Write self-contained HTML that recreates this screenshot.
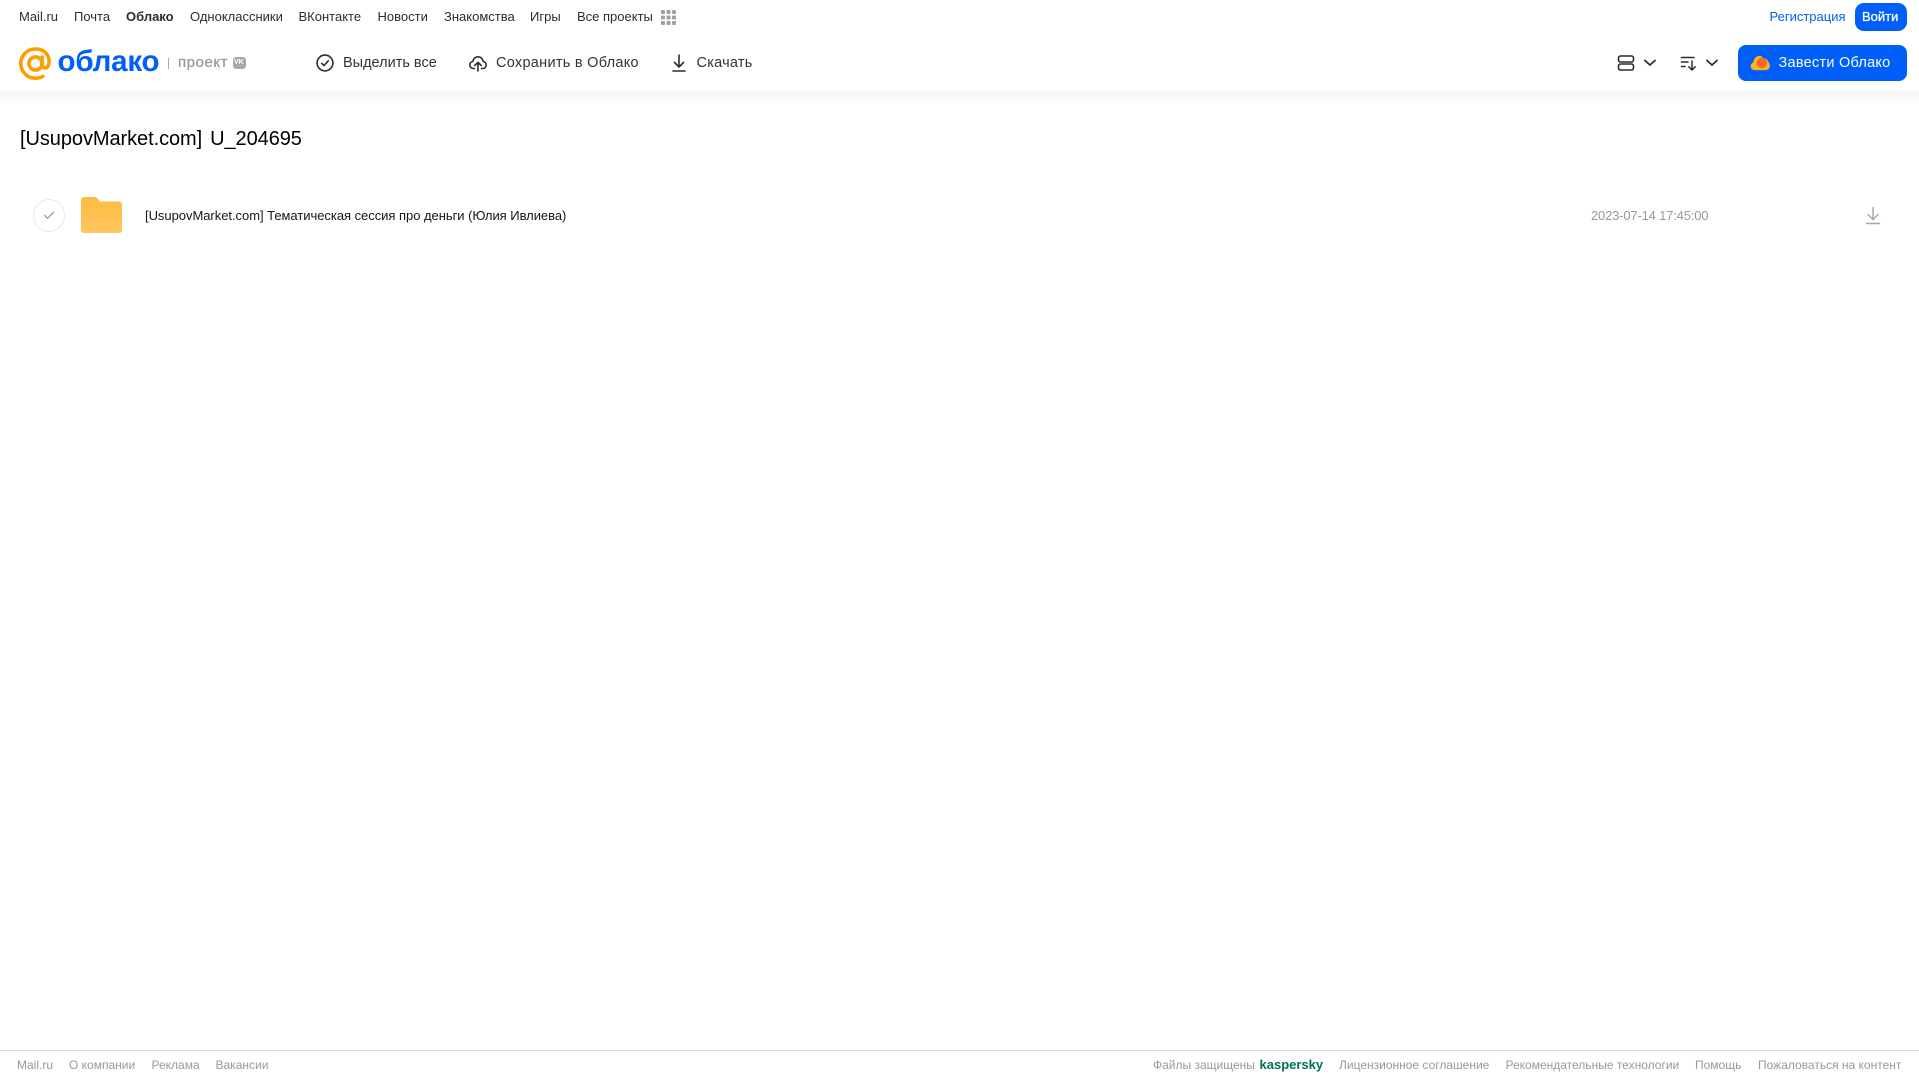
<!DOCTYPE html>
<html lang="ru">
<head>
<meta charset="utf-8">
<title>Облако</title>
<style>
html,body{margin:0;padding:0;background:#fff;}
body{position:relative;width:1919px;height:1079px;overflow:hidden;font-family:"Liberation Sans",Arial,sans-serif;}
.t{position:absolute;white-space:nowrap;line-height:16px;}
.n{top:9px;font-size:13px;color:#2c2d2e;}
.a{top:55px;font-size:14.5px;color:#333;}
.f{top:1057px;font-size:12px;color:#999;}
svg{position:absolute;display:block;}
#hdr{position:absolute;left:0;top:0;width:1919px;height:91px;background:#fff;}
#shadow{position:absolute;left:0;top:91px;width:1919px;height:12px;background:linear-gradient(#f5f5f5,#fff);}
#line{position:absolute;left:0;top:1050px;width:1919px;height:1px;background:#d9d9d9;}
</style>
</head>
<body>
<div id="shadow"></div>
<div id="hdr"></div>

<span class="t n" style="left:19px">Mail.ru</span>
<span class="t n" style="left:74px">Почта</span>
<span class="t n" style="left:126px;font-weight:700">Облако</span>
<span class="t n" style="left:190px">Одноклассники</span>
<span class="t n" style="left:298.500px">ВКонтакте</span>
<span class="t n" style="left:377.500px">Новости</span>
<span class="t n" style="left:444px">Знакомства</span>
<span class="t n" style="left:530px">Игры</span>
<span class="t n" style="left:577px">Все проекты</span>
<svg style="left:661px;top:10px" width="15" height="15" fill="#a0a0a0">
<rect x="0" y="0" width="4" height="4" rx="1"/><rect x="5.500" y="0" width="4" height="4" rx="1"/><rect x="11" y="0" width="4" height="4" rx="1"/>
<rect x="0" y="5.500" width="4" height="4" rx="1"/><rect x="5.500" y="5.500" width="4" height="4" rx="1"/><rect x="11" y="5.500" width="4" height="4" rx="1"/>
<rect x="0" y="11" width="4" height="4" rx="1"/><rect x="5.500" y="11" width="4" height="4" rx="1"/><rect x="11" y="11" width="4" height="4" rx="1"/>
</svg>

<span class="t" style="left:1769.500px;top:9px;font-size:13px;color:#005ff9">Регистрация</span>
<div style="position:absolute;left:1855px;top:3px;width:52px;height:28px;border-radius:9px;background:#005ff9"></div>
<span class="t" style="left:1862px;top:9px;font-size:13px;color:#fff;-webkit-text-stroke:.3px #fff">Войти</span>

<!-- logo -->
<svg style="left:18px;top:46px" width="35" height="35" viewBox="0 0 35 35" fill="none" stroke="#ff9e00" stroke-width="3.600">
<circle cx="17.500" cy="17.500" r="6.600"/>
<path d="M24.100 11v8.200c0 3.200 4.900 3.900 6.300 .2 2.300-6.400-1-16.400-13-16.400C8.800 3 2.800 9.800 2.800 17.500c0 8.300 6.400 14.700 14.700 14.700 3 0 5.300-.7 7.300-1.800" stroke-linecap="round"/>
</svg>
<span class="t" style="left:57.500px;top:45px;font-size:29.500px;line-height:34px;font-weight:700;color:#005ff9;letter-spacing:-.2px">облако</span>
<div style="position:absolute;left:168px;top:58px;width:1px;height:11px;background:#a8a8a8"></div>
<span class="t" style="left:178px;top:55px;font-size:15px;color:#999;letter-spacing:.55px;-webkit-text-stroke:.25px #999">проект</span>
<div style="position:absolute;left:233px;top:57px;width:13px;height:12px;border-radius:3px;background:#a9a9a9"></div>
<span class="t" style="left:234px;top:55px;font-size:7px;font-weight:700;color:#fff">VK</span>

<!-- actions -->
<svg style="left:315px;top:53px" width="20" height="20" viewBox="0 0 20 20" fill="none" stroke="#2c2d2e" stroke-width="1.600">
<circle cx="10" cy="10" r="7.900"/><path d="M6.700 10.300l2.300 2.300 4.300-4.800" stroke-linecap="round" stroke-linejoin="round"/>
</svg>
<span class="t a" style="left:343px">Выделить все</span>

<svg style="left:468px;top:53px" width="20" height="20" viewBox="0 0 20 20" fill="none" stroke="#2c2d2e" stroke-width="1.600" stroke-linecap="round" stroke-linejoin="round">
<path d="M6.500 15.500H5.500C3.300 15.500 1.800 14 1.800 12c0-1.800 1.200-3.200 3-3.500C5.200 5.700 7.300 3.800 10 3.800s4.800 1.900 5.200 4.700c1.800.3 3 1.700 3 3.500 0 2-1.500 3.500-3.700 3.500h-1"/>
<path d="M10 18V9.500M6.800 12.500L10 9.300l3.200 3.200"/>
</svg>
<span class="t a" style="left:496px;letter-spacing:.28px">Сохранить в Облако</span>

<svg style="left:669px;top:53px" width="20" height="20" viewBox="0 0 20 20" fill="none" stroke="#2c2d2e" stroke-width="1.600" stroke-linecap="round" stroke-linejoin="round">
<path d="M10 2v12M5.500 9.500L10 14l4.500-4.500M4 18h12"/>
</svg>
<span class="t a" style="left:696.500px;letter-spacing:.24px">Скачать</span>

<!-- right icons -->
<svg style="left:1617px;top:54px" width="18" height="18" viewBox="0 0 18 18" fill="none" stroke="#2c2d2e" stroke-width="1.600">
<rect x="1.500" y="2" width="15" height="6" rx="2"/><rect x="1.500" y="10" width="15" height="6" rx="2"/>
</svg>
<svg style="left:1643px;top:58px" width="14" height="10" viewBox="0 0 14 10" fill="none" stroke="#2c2d2e" stroke-width="1.800" stroke-linecap="round" stroke-linejoin="round"><path d="M2 2.500l5 4.500 5-4.500"/></svg>
<svg style="left:1680px;top:54px" width="18" height="18" viewBox="0 0 18 18" fill="none" stroke="#2c2d2e" stroke-width="1.500" stroke-linecap="round" stroke-linejoin="round">
<path d="M1.500 3.500H14M1.500 8H8M1.500 12.500H5M12 7v9M8.800 12.800L12 16l3.200-3.200"/>
</svg>
<svg style="left:1705px;top:58px" width="14" height="10" viewBox="0 0 14 10" fill="none" stroke="#2c2d2e" stroke-width="1.800" stroke-linecap="round" stroke-linejoin="round"><path d="M2 2.500l5 4.500 5-4.500"/></svg>

<div style="position:absolute;left:1738px;top:45px;width:169px;height:36px;border-radius:8px;background:#005ff9"></div>
<svg style="left:1750px;top:54px" width="20" height="18" viewBox="0 0 21 18">
<path d="M5 16.500C2.200 16.500 .8 14.500 .8 12.300c0-1.800 1-3.200 2.500-3.800C4 4.500 6.500 1.500 9.500 1.500c2 0 3.500 1 4.500 2.500 3 .2 4.800 1.800 5.500 4.500 1 .8 1.300 2 1.300 3.500 0 2.700-2 4.500-4.500 4.500z" fill="#ffb02e"/>
<circle cx="12.500" cy="9" r="5.500" fill="#f26d21"/>
</svg>
<span class="t" style="left:1778.500px;top:55px;font-size:14.500px;color:#fff;letter-spacing:.25px">Завести Облако</span>

<!-- title -->
<span class="t" style="left:20px;top:125px;font-size:20px;line-height:28px;color:#000;letter-spacing:-.07px;word-spacing:2.500px">[UsupovMarket.com] U_204695</span>

<!-- row -->
<div style="position:absolute;left:33px;top:199px;width:30px;height:31px;border:1px solid #e7e8ea;border-radius:50%"></div>
<svg style="left:41px;top:208px" width="16" height="14" viewBox="0 0 16 14" fill="none" stroke="#9a9a9a" stroke-width="1.300" stroke-linecap="round" stroke-linejoin="round"><path d="M3.500 7.300l3 3 6-6"/></svg>
<svg style="left:81px;top:197px" width="41" height="36" viewBox="0 0 41 36">
<defs><linearGradient id="g" x1="0" y1="0" x2="0" y2="1"><stop offset="0" stop-color="#ffbb40"/><stop offset="1" stop-color="#ffc85f"/></linearGradient></defs>
<path d="M0 3a3 3 0 0 1 3-3h10c2 0 3.500 1 4.500 2.500l1.300 2H38a3 3 0 0 1 3 3V33.500a2.500 2.500 0 0 1-2.500 2.500H2.500A2.500 2.500 0 0 1 0 33.500z" fill="url(#g)"/>
<path d="M0 9h41v1H0z" fill="#f7b23c" opacity=".6"/>
</svg>
<span class="t" style="left:145px;top:208px;font-size:13px;color:#1a1020;letter-spacing:-.035px">[UsupovMarket.com] Тематическая сессия про деньги (Юлия Ивлиева)</span>
<span class="t" style="left:1591px;top:208px;font-size:13px;color:#999;letter-spacing:-.18px">2023-07-14 17:45:00</span>
<svg style="left:1865px;top:206px" width="16" height="19" viewBox="0 0 16 19" fill="none" stroke="#a6a6a6" stroke-width="1.400" stroke-linecap="round" stroke-linejoin="round">
<path d="M8 1.500v12M3 8.500l5 5 5-5M1.500 17.500h13"/>
</svg>

<!-- footer -->
<div id="line"></div>
<span class="t f" style="left:17px">Mail.ru</span>
<span class="t f" style="left:69px">О компании</span>
<span class="t f" style="left:151.500px">Реклама</span>
<span class="t f" style="left:215.500px">Вакансии</span>
<span class="t f" style="left:1153px">Файлы защищены</span>
<span class="t f" style="left:1259.500px;color:#00705a;font-weight:700;font-size:13px">kaspersky</span>
<span class="t f" style="left:1339px">Лицензионное соглашение</span>
<span class="t f" style="left:1505.500px">Рекомендательные технологии</span>
<span class="t f" style="left:1695px">Помощь</span>
<span class="t f" style="left:1758px">Пожаловаться на контент</span>
</body>
</html>
